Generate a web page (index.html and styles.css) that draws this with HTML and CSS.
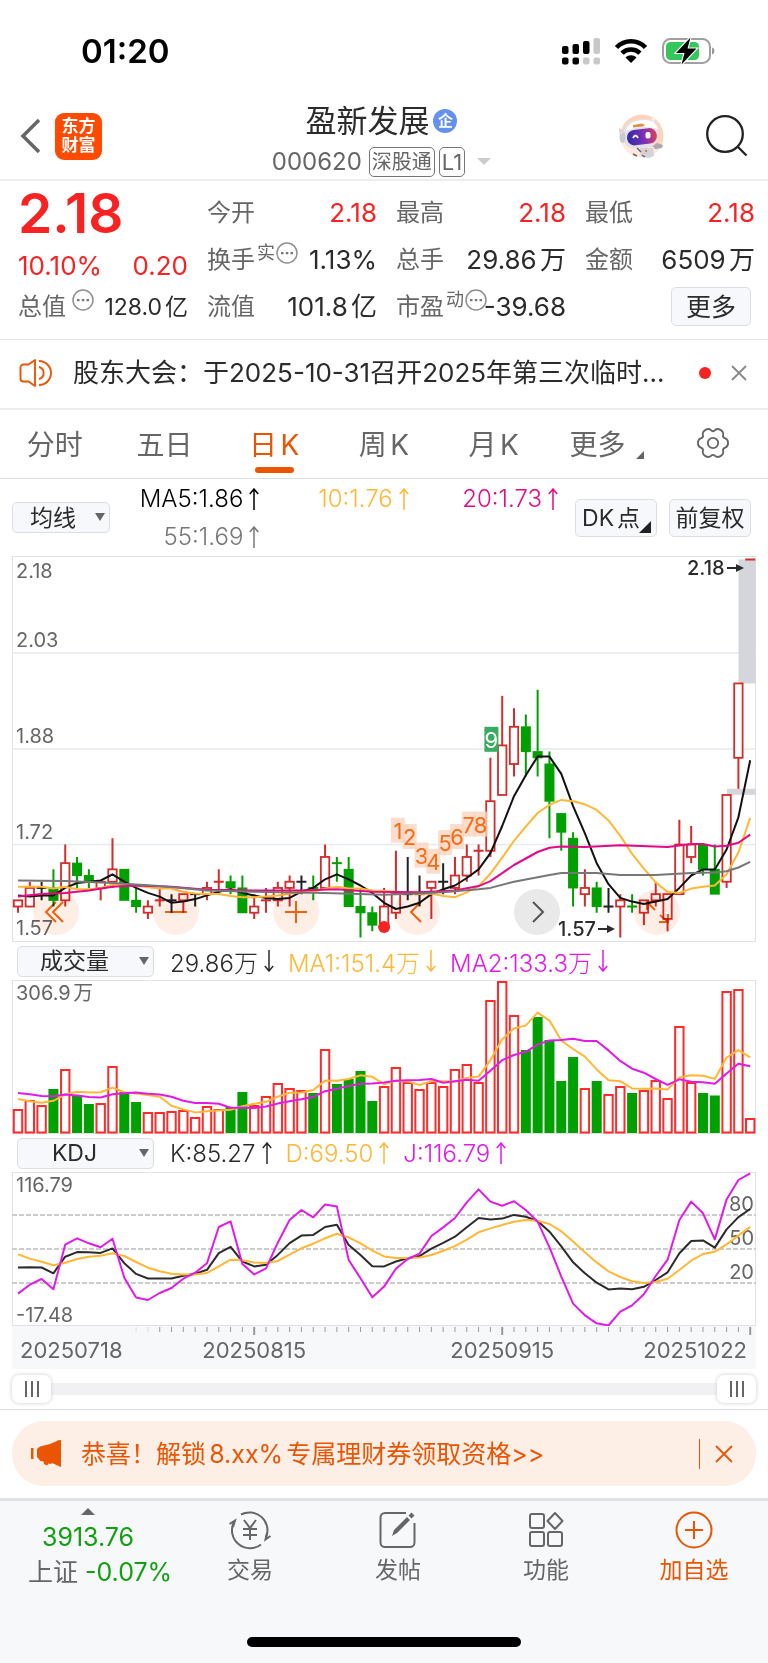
FILE: index.html
```html
<!DOCTYPE html>
<html lang="zh-CN">
<head>
<meta charset="utf-8">
<meta name="viewport" content="width=device-width, initial-scale=1">
<title>盈新发展 000620</title>
<link rel="stylesheet" href="styles.css">
</head>
<body>
<svg class="symbols" aria-hidden="true">
  <symbol id="arrow-up" viewBox="0 0 10 22"><path d="M5 22V1M.8 6L5 1l4.200 5"/></symbol>
  <symbol id="arrow-down" viewBox="0 0 10 22"><path d="M5 0v21M.8 16L5 21l4.200-5"/></symbol>
  <symbol id="more-dots" viewBox="0 0 22 22"><circle cx="11" cy="11" r="10" fill="none" stroke="#8f8f8f" stroke-width="1.500"/><path d="M5 10h2.500v2.200H5zM9.800 10h2.500v2.200H9.800zM14.500 10H17v2.200h-2.500z" fill="#777"/></symbol>
</svg>

<header class="status">
  <time class="clock">01:20</time>
  <div class="status-icons">
    <svg width="39" height="28" viewBox="0 0 39 28" aria-label="信号">
      <g fill="#000"><rect x="0" y="9" width="6.500" height="8" rx="2"/><rect x="10.500" y="7" width="6.500" height="10" rx="2"/><rect x="21" y="4" width="6.500" height="13" rx="2"/><rect x="0" y="20.500" width="6.500" height="7" rx="2"/><rect x="10.500" y="20.500" width="6.500" height="7" rx="2"/></g>
      <g fill="#c8c8c8"><rect x="31.500" y="1" width="6.500" height="16" rx="2"/><rect x="21" y="20.500" width="6.500" height="7" rx="2"/><rect x="31.500" y="20.500" width="6.500" height="7" rx="2"/></g>
    </svg>
    <svg width="34" height="26" viewBox="0 0 34 26" aria-label="无线网络">
      <g fill="none" stroke="#000" stroke-width="4.600"><path d="M2.500 9.500C10.500 1.200 23.500 1.200 31.500 9.500"/><path d="M8 15.200c5-5 13-5 18 0"/></g>
      <path d="M11.500 19.500c3-3 8-3 11 0L17 25z"/>
    </svg>
    <svg width="56" height="28" viewBox="0 0 56 28" aria-label="正在充电">
      <rect x="2" y="2" width="47" height="24" rx="7.500" fill="#fff" stroke="#a0a0a0" stroke-width="2"/>
      <rect x="5" y="5" width="33" height="18" rx="4.500" fill="#34c759"/>
      <path d="M51 10.500c3.200.8 3.200 6.200 0 7z" fill="#999"/>
      <path d="M29.500.5L15 16h8.500L20.500 27.500 35.500 11.500h-9z" fill="#000" stroke="#fff" stroke-width="2.200" paint-order="stroke"/>
    </svg>
  </div>
</header>

<nav class="title-bar">
  <div class="title-side">
    <button class="icon-button" aria-label="返回"><svg width="22" height="36" viewBox="0 0 22 36"><path d="M19 2L3 18l16 16" fill="none" stroke="#666" stroke-width="3.500"/></svg></button>
    <a class="logo" href="#"><span>东方</span><span>财富</span></a>
  </div>
  <div class="title-main">
    <h1 class="stock-name">盈新发展<span class="company">企</span></h1>
    <div class="stock-code"><span>000620</span><span class="tag tag-market">深股通</span><span class="tag tag-level">L1</span><i class="title-caret"></i></div>
  </div>
  <div class="title-side title-actions">
    <button class="icon-button" aria-label="智能助手">
      <svg width="46" height="46" viewBox="0 0 46 46">
        <defs><linearGradient id="visor" x1="0" x2="1"><stop stop-color="#3327a8"/><stop offset=".55" stop-color="#7a2fb8"/><stop offset="1" stop-color="#e0405c"/></linearGradient></defs>
        <circle cx="24" cy="23" r="21.500" fill="#ffd3bb"/>
        <path d="M33 7l3-4 1 8z" fill="#f3f1f5"/>
        <path d="M5 36l-4-6 4-6 12 8 17 2 7 4-7 5-10 3-12-3z" fill="#fff" opacity=".5"/>
        <path d="M5 24C4 11 14 6 25 6c11 0 17 6 16 15-1 11-10 15-20 15S6 33 5 24z" fill="#e2e1e8"/>
        <path d="M8 18C10 10 18 7 27 7c7 0 12 4 13 9-8-3-22-3-32 2z" fill="#fff"/>
        <ellipse cx="4.500" cy="24" rx="3" ry="6" fill="#c9c9d0"/><path d="M1 15l5 2-1 4-4-1z" fill="#d8d8de"/>
        <path d="M15 12l9-1.500 3 1.500-2 1.500-10 1z" fill="#dd9248"/>
        <rect x="9" y="16" width="30" height="15.500" rx="7.500" transform="rotate(-7 24 24)" fill="url(#visor)"/>
        <path d="M15 25q2.500-5 5 0" fill="none" stroke="#fff" stroke-width="1.800"/><rect x="27.500" y="19" width="5" height="6.500" rx="2" fill="#fff"/>
        <path d="M22 35h13l1 8-5 2-8-1z" fill="#d4d3da"/><path d="M35 33l4-3 6 2-1 3-7 1z" fill="#aaa9b3"/><path d="M19 35l4 4M15 41l4 2M24 42l3 2" stroke="#68626e" stroke-width="1.500"/><circle cx="28" cy="38" r="1.200" fill="#e97c32"/>
      </svg>
    </button>
    <button class="icon-button" aria-label="搜索"><svg width="44" height="44" viewBox="0 0 44 44"><g fill="none" stroke="#222" stroke-width="2.300"><circle cx="20" cy="20" r="17.800"/><path d="M32.500 32.500l9 9"/></g></svg></button>
  </div>
</nav>

<section class="quote">
  <strong class="price">2.18</strong>
  <div class="cell"><span class="label">今开</span><span class="value up">2.18</span></div>
  <div class="cell"><span class="label">最高</span><span class="value up">2.18</span></div>
  <div class="cell"><span class="label">最低</span><span class="value up">2.18</span></div>
  <div class="cell cell-change"><span class="value up">10.10%</span><span class="value up">0.20</span></div>
  <div class="cell"><span class="label">换手<sup>实</sup><svg class="info"><use href="#more-dots"/></svg></span><span class="value">1.13%</span></div>
  <div class="cell"><span class="label">总手</span><span class="value">29.86万</span></div>
  <div class="cell"><span class="label">金额</span><span class="value">6509万</span></div>
  <div class="cell"><span class="label">总值<svg class="info info-spaced"><use href="#more-dots"/></svg></span><span class="value value-small">128.0亿</span></div>
  <div class="cell"><span class="label">流值</span><span class="value">101.8亿</span></div>
  <div class="cell"><span class="label">市盈<sup>动</sup><svg class="info"><use href="#more-dots"/></svg></span><span class="value">-39.68</span></div>
  <div class="cell cell-end"><button class="box-button quote-more">更多</button></div>
</section>

<section class="notice">
  <svg width="34" height="30" viewBox="0 0 34 30"><g fill="none" stroke="#ea5504" stroke-width="1.900"><path d="M16 2L9.500 6.500H4.500A3 3 0 0 0 1.500 9.500v11a3 3 0 0 0 3 3h5L16 28z" stroke-linejoin="round"/><path d="M20 3a12 12 0 0 1 0 24M20 9a6.200 6.200 0 0 1 0 12"/></g></svg>
  <a class="notice-text" href="#">股东大会：于2025-10-31召开2025年第三次临时...</a>
  <i class="unread"></i>
  <button class="icon-button" aria-label="关闭公告"><svg width="16" height="16" viewBox="0 0 16 16"><path d="M1 1l14 14M15 1L1 15" stroke="#888" stroke-width="1.800"/></svg></button>
</section>

<nav class="periods">
  <button class="period">分时</button>
  <button class="period">五日</button>
  <button class="period period-active">日K</button>
  <button class="period">周K</button>
  <button class="period">月K</button>
  <button class="period period-more">更多</button>
  <button class="period" aria-label="图表设置"><svg width="32" height="32" viewBox="-1 -1 34 34"><g fill="none" stroke="#666" stroke-width="2"><path d="M32 16Q32 20 29 20.900Q26 21.750 26.800 24.800Q27.500 27.900 24 29.900Q20.500 31.900 18.200 29.700Q16 27.500 13.800 29.700Q11.500 31.900 8 29.900Q4.500 27.900 5.200 24.800Q6 21.750 3 20.900Q0 20 0 16Q0 12 3 11.100Q6 10.250 5.200 7.200Q4.500 4.100 8 2.100Q11.500.1 13.800 2.300Q16 4.500 18.200 2.300Q20.500.1 24 2.100Q27.500 4.100 26.800 7.200Q26 10.250 29 11.100Q32 12 32 16Z"/><circle cx="16" cy="16" r="5.500"/></g></svg></button>
</nav>

<main class="charts">
  <div class="main-tools">
    <label class="picker picker-small"><select aria-label="主图指标"><option>均线</option></select></label>
    <div class="averages">
      <span class="ink-black">MA5:1.86<svg class="arrow"><use href="#arrow-up"/></svg></span>
      <span class="ink-orange">10:1.76<svg class="arrow"><use href="#arrow-up"/></svg></span>
      <span class="ink-pink">20:1.73<svg class="arrow"><use href="#arrow-up"/></svg></span>
      <span class="ink-grey">55:1.69<svg class="arrow"><use href="#arrow-up"/></svg></span>
    </div>
    <button class="box-button tool dk">DK点</button>
    <button class="box-button tool">前复权</button>
  </div>

  <div class="candle-pane">
    <svg id="candles" class="chart" viewBox="0 0 744 386" role="img" aria-label="日K线图"></svg>
    <div class="chart-controls">
      <button aria-label="最早"><svg viewBox="0 0 46 46"><path d="M23 13L13 23l10 10M30 13L20 23l10 10"/></svg></button>
      <button aria-label="缩小"><svg viewBox="0 0 46 46"><path d="M12 23h22"/></svg></button>
      <button aria-label="放大"><svg viewBox="0 0 46 46"><path d="M12 23h22M23 12v22"/></svg></button>
      <button aria-label="左移"><svg viewBox="0 0 46 46"><path d="M27 13L17 23l10 10"/></svg></button>
      <button class="control-grey" aria-label="右移"><svg viewBox="0 0 46 46"><path d="M19 13l10 10-10 10"/></svg></button>
      <button aria-label="全屏"><svg viewBox="0 0 46 46"><path d="M21 21l-7-7M13 21v-8h8M26 26l8 7M34 25v8h-9"/></svg></button>
    </div>
  </div>

  <div class="sub-tools">
    <label class="picker"><select aria-label="副图指标一"><option>成交量</option></select></label>
    <span class="ink-dark">29.86万<svg class="arrow"><use href="#arrow-down"/></svg></span>
    <span class="ink-orange">MA1:151.4万<svg class="arrow"><use href="#arrow-down"/></svg></span>
    <span class="ink-magenta">MA2:133.3万<svg class="arrow"><use href="#arrow-down"/></svg></span>
  </div>
  <svg id="volume" class="chart" viewBox="0 0 744 154" role="img" aria-label="成交量图"></svg>

  <div class="sub-tools">
    <label class="picker"><select aria-label="副图指标二"><option>KDJ</option></select></label>
    <span class="ink-dark">K:85.27<svg class="arrow"><use href="#arrow-up"/></svg></span>
    <span class="ink-orange">D:69.50<svg class="arrow"><use href="#arrow-up"/></svg></span>
    <span class="ink-magenta">J:116.79<svg class="arrow"><use href="#arrow-up"/></svg></span>
  </div>
  <svg id="kdj" class="chart" viewBox="0 0 744 154" role="img" aria-label="KDJ图"></svg>
  <svg id="axis" class="chart chart-axis" viewBox="0 0 744 43" role="img" aria-label="日期轴"></svg>

  <div class="range">
    <input type="range" min="0" max="100" value="0" aria-label="起始日期">
    <input type="range" min="0" max="100" value="100" aria-label="结束日期">
  </div>
</main>

<section class="promo-area">
  <div class="promo">
    <svg width="32" height="28" viewBox="0 0 32 28" fill="#ea5504"><path d="M31 0v27l-9-4-1 1-2.500-.5-1.500 2-3-1.500-.5-2.500-3-.500L7 17V9l3-2.500 10-2.500 7-3V.5z"/><path d="M1 8h2.500v11H1z"/></svg>
    <a class="promo-text" href="#">恭喜！解锁8.xx%专属理财券领取资格&gt;&gt;</a>
    <button class="promo-close" aria-label="关闭"><svg width="18" height="18" viewBox="0 0 18 18"><path d="M1 1l16 16M17 1L1 17" stroke="#ea5504" stroke-width="1.800"/></svg></button>
  </div>
</section>

<footer class="footer">
  <nav class="dock">
    <a class="index" href="#">
      <i class="index-caret"></i>
      <span class="index-value down">3913.76</span>
      <span>上证 <span class="down">-0.07%</span></span>
    </a>
    <a class="dock-item" href="#">
      <svg width="44" height="42" viewBox="0 0 44 42"><g fill="none" stroke="#666" stroke-width="2"><path d="M13 5.500A18 18 0 0 1 38 28.500M33 35.500A18 18 0 0 1 6 13"/><path d="M1.500 15L7 11.500 5 18M42.500 27L37.500 30.500 39 24"/><path d="M16 11l6 8 6-8M22 19v12M15 20h14M15 26h14"/></g></svg>
      <span>交易</span>
    </a>
    <a class="dock-item" href="#">
      <svg width="44" height="42" viewBox="0 0 44 42"><path d="M30 4H9a4.500 4.500 0 0 0-4.500 4.500v25A4.500 4.500 0 0 0 9 38h25a4.500 4.500 0 0 0 4.500-4.500V14" fill="none" stroke="#666" stroke-width="2"/><path d="M16 27l2-6L31 8l3 3-13 13zM32.500 6.500l3-3 3 3-3 3z" fill="#666"/></svg>
      <span>发帖</span>
    </a>
    <a class="dock-item" href="#">
      <svg width="44" height="42" viewBox="0 0 44 42"><g fill="none" stroke="#666" stroke-width="2"><rect x="6" y="5" width="14" height="14" rx="2"/><rect x="6" y="23" width="14" height="14" rx="2"/><rect x="24" y="23" width="14" height="14" rx="2"/><path d="M31 4l7.500 8L31 20l-7.500-8z" stroke-linejoin="round"/></g></svg>
      <span>功能</span>
    </a>
    <a class="dock-item dock-add" href="#">
      <svg width="44" height="42" viewBox="0 0 44 42"><g fill="none" stroke="#ea5504" stroke-width="2"><circle cx="22" cy="21" r="17.500"/><path d="M13 21h18M22 12v18"/></g></svg>
      <span>加自选</span>
    </a>
  </nav>
  <div class="home-bar"></div>
</footer>
<script src="charts.js"></script>
</body>
</html>
```

FILE: styles.css
```css
* { box-sizing: border-box; }

body {
  margin: 0;
  background: #fff;
  color: #2b2b2b;
  font-family: Inter, "Noto Sans CJK SC", sans-serif;
  font-size: 25px;
  text-autospace: normal;
}

button, select, input { font: inherit; color: inherit; margin: 0; }
button { padding: 0; border: 0; background: none; }
a { color: inherit; text-decoration: none; }
svg { display: block; flex: none; }
.symbols { position: absolute; width: 0; height: 0; }
.icon-button { display: block; flex: none; }

/* status bar */
.status {
  display: flex;
  justify-content: space-between;
  align-items: center;
  height: 96px;
  padding: 6px 51px 0 81px;
}
.clock { color: #000; font-size: 33px; font-weight: 600; line-height: 40px; }
.status-icons { display: flex; align-items: center; gap: 13px; }

/* title bar */
.title-bar {
  display: grid;
  grid-template-columns: 1fr auto 1fr;
  align-items: center;
  height: 85px;
  padding: 0 19px 0 20px;
  border-bottom: 2px solid #ededef;
}
.title-side { display: flex; align-items: center; gap: 13px; padding-bottom: 3px; }
.title-actions { justify-content: flex-end; gap: 41px; }
.logo {
  display: grid;
  align-content: center;
  justify-items: center;
  width: 47px;
  height: 47px;
  border-radius: 9px;
  background: #ff4a00;
  color: #fff;
  font-size: 17px;
  font-weight: 700;
  line-height: 19px;
}
.title-main { display: grid; justify-items: center; gap: 4px; padding-right: 6px; }
.stock-name {
  display: flex;
  align-items: center;
  gap: 4px;
  margin: 0;
  font-size: 31px;
  font-weight: 400;
  line-height: 44px;
}
.company {
  width: 24px;
  height: 24px;
  border-radius: 50%;
  background: #6591ee;
  color: #fff;
  font-size: 15px;
  font-weight: 700;
  line-height: 23px;
  text-align: center;
}
.stock-code { display: flex; align-items: center; gap: 4px; color: #666; font-size: 24px; line-height: 30px; }
.tag { padding: 0 2px; border: 1px solid #777; border-radius: 5px; font-size: 20px; line-height: 28px; }
.tag-market { margin-left: 3px; }
.tag-level { font-size: 22px; }
.title-caret { margin-left: 8px; border: 7px solid transparent; border-top-color: #ccc; border-bottom: 0; }

/* quote grid */
.quote {
  display: grid;
  grid-template-columns: repeat(4, minmax(0, 1fr));
  grid-auto-rows: 47px;
  align-items: center;
  column-gap: 19px;
  padding: 8px 13px 9px 18px;
  border-bottom: 1px solid #e5e5e7;
}
.price { color: #f72323; font-size: 55px; font-weight: 600; line-height: 52px; }
.cell { display: flex; align-items: center; white-space: nowrap; line-height: 36px; }
.cell-change { align-self: end; line-height: 34px; }
.label { display: flex; flex: 1 1 0; min-width: 0; color: #666; font-size: 24px; }
.label sup { margin: 0 1px 0 2px; font-size: 18px; line-height: 22px; }
.info { width: 22px; height: 22px; }
.info-spaced { margin-left: 6px; }
.value { flex: none; font-size: 26px; }
.value:first-child { flex: 1; }
.value-small { font-size: 23px; }
.up { color: #f72323; }
.down { color: #12a012; }
.cell-end { justify-content: flex-end; }
.box-button {
  flex: none;
  border: 1px solid #dcdee5;
  border-radius: 5px;
  background: #f7f8fb;
  line-height: 36px;
}
.quote-more { width: 80px; height: 39px; margin-right: 4px; }

/* notice */
.notice {
  display: flex;
  align-items: center;
  height: 70px;
  padding: 0 21px 2px 19px;
  border-bottom: 2px solid #ededef;
}
.notice-text {
  flex: 1;
  margin-left: 20px;
  white-space: nowrap;
  font-size: 26px;
  line-height: 40px;
  text-autospace: no-autospace;
}
.unread { width: 12px; height: 12px; margin: 0 20px 0 8px; border-radius: 50%; background: #f72323; }

/* period tabs */
.periods {
  display: grid;
  grid-template-columns: repeat(7, 1fr);
  height: 69px;
  border-bottom: 1px solid #dcdde5;
}
.period {
  position: relative;
  display: grid;
  place-items: center;
  padding-bottom: 3px;
  color: #666;
  font-size: 28px;
}
.period-active { color: #ea5504; }
.period-active::after {
  content: "";
  position: absolute;
  bottom: 5px;
  width: 39px;
  height: 6px;
  border-radius: 3px;
  background: #ea5504;
}
.period-more { padding-right: 12px; }
.period-more::after {
  content: "";
  position: absolute;
  right: 14px;
  bottom: 19px;
  border: 4px solid #666;
  border-top-color: transparent;
  border-left-color: transparent;
}

/* charts */
.charts { padding: 0 12px; }
.main-tools { display: flex; align-items: center; height: 77px; padding-right: 5px; }
.picker { position: relative; flex: none; width: 137px; height: 31px; }
.picker-small { width: 98px; }
.picker select {
  display: block;
  width: 100%;
  height: 31px;
  padding: 0 22px 0 0;
  border: 1px solid #dcdee5;
  border-radius: 5px;
  background: #f7f8fb;
  appearance: none;
  font-size: 23px;
  font-weight: 400;
  line-height: 28px;
  text-align-last: center;
}
.picker-small select { padding-right: 16px; }
.picker::after {
  content: "";
  position: absolute;
  top: 11px;
  right: 5px;
  border: 5px solid transparent;
  border-top: 8px solid #666;
  border-bottom: 0;
}
.averages {
  display: grid;
  flex: 1;
  grid-template-columns: repeat(3, 1fr);
  margin-right: 17px;
  font-size: 24px;
  font-weight: 300;
  line-height: 38px;
}
.averages span { display: flex; align-items: center; justify-content: flex-end; gap: 6px; }
.arrow { width: 10px; height: 22px; fill: none; stroke: currentColor; stroke-width: 1.500; }
.tool { width: 82px; height: 38px; font-size: 23px; }
.dk { position: relative; margin-right: 12px; padding-right: 10px; }
.dk::after {
  content: "";
  position: absolute;
  right: 5px;
  bottom: 3px;
  border: 6px solid #222;
  border-top-color: transparent;
  border-left-color: transparent;
}
.ink-black { color: #000; }
.ink-dark { color: #2b2b2b; }
.ink-grey { color: #777; }
.ink-orange { color: #ffb735; }
.ink-pink { color: #e20a86; }
.ink-magenta { color: #e01be8; }

.chart { width: 100%; height: auto; font-size: 20px; }
.chart-axis { background: #f7f8fa; font-size: 22px; }
.candle-pane { position: relative; }
.chart-controls {
  position: absolute;
  bottom: 7px;
  left: 21px;
  right: 76px;
  display: flex;
  justify-content: space-between;
  mix-blend-mode: multiply;
}
.chart-controls button { width: 46px; height: 46px; border-radius: 50%; background: #ffeee6; }
.chart-controls svg { fill: none; stroke: #f2600c; stroke-width: 2; }
.chart-controls .control-grey { background: #e9e9e9; }
.chart-controls .control-grey svg { stroke: #555; }

.sub-tools {
  display: flex;
  align-items: center;
  gap: 14px;
  height: 38px;
  padding-left: 5px;
  font-size: 24px;
  font-weight: 300;
  white-space: nowrap;
  text-autospace: no-autospace;
}
.sub-tools .picker { margin-right: 2px; }
.sub-tools span { display: flex; align-items: center; gap: 6px; }

.range { position: relative; display: grid; align-items: center; height: 40px; }
.range::before { content: ""; height: 12px; grid-area: 1 / 1; background: #f1f1f4; }
.range input { grid-area: 1 / 1; width: 100%; height: 28px; appearance: none; background: none; pointer-events: none; }
.range input::-webkit-slider-thumb {
  width: 39px;
  height: 28px;
  appearance: none;
  border-radius: 7px;
  background:
    linear-gradient(90deg, #666 2px, transparent 2px 6px, #666 6px 8px, transparent 8px 12px, #666 12px) center / 14px 16px no-repeat,
    #fff;
  box-shadow: 0 0 4px #ccc;
  pointer-events: auto;
}

/* promotion */
.promo-area { padding: 11px 12px 12px; border-top: 1px solid #dcdde5; }
.promo {
  display: flex;
  align-items: center;
  height: 65px;
  padding: 0 23px 0 18px;
  border-radius: 32px;
  background: #fdeee6;
  color: #ea5504;
}
.promo-text { flex: 1; margin-left: 19px; padding-bottom: 3px; }
.promo-close { padding: 6px 0 6px 15px; border-left: 1px solid #ea5504; }

/* bottom dock */
.footer { padding-bottom: 17px; border-top: 3px solid #e0e1e3; background: #f7f8fa; }
.dock { display: grid; grid-template-columns: 176px repeat(4, 1fr); height: 136px; color: #666; }
.index { display: grid; align-content: start; justify-items: center; padding: 7px 0 0 24px; font-size: 25px; line-height: 35px; }
.index-caret { margin: 0 24px 5px 0; border: 7px solid transparent; border-top: 0; border-bottom-color: #666; }
.index-value { margin-right: 24px; }
.dock-item { display: grid; align-content: start; justify-items: center; padding-top: 8px; font-size: 23px; line-height: 38px; }
.dock-add { color: #ea5504; }
.home-bar { width: 274px; height: 10px; margin: 0 auto; border-radius: 5px; background: #000; }
```

FILE: charts.js
```js
const NS = 'http://www.w3.org/2000/svg';
const RED = '#d42b2b', GREEN = '#00a000';

// open, close, high, low, in fen
const bars = [
  [162,163,163,161],[162,165,166,162],[165,165,166,163],[165,163,168,162],[163,169,172,162],
  [169,167,170,165],[167,166,168,165],[165,166,166,163],[166,168,173,165],[168,163,168,163],
  [163,162,165,161],[161,162,163,160],[163,163,165,162],[163,163,164,161],[163,164,164,161],
  [164,164,164,162],[164,165,166,163],[166,166,168,164],[166,165,167,164],[165,161,167,161],
  [161,162,164,160],[163,163,165,161],[163,165,166,162],[165,166,167,162],[166,166,167,164],
  [165,165,167,163],[165,170,172,165],[169,169,170,166],[168,162,170,162],[162,161,165,157],
  [161,159,162,158],[159,162,165,159],[161,164,171,160],[164,164,170,163],[164,164,167,162],
  [165,166,166,160],[166,166,169,164],[165,167,170,164],[167,170,172,166],[171,171,172,167],
  [171,179,186,170],[180,188,196,180],[185,191,194,183],[191,187,193,183],[187,186,197,183],
  [185,179,187,173],[177,174,177,171],[173,165,174,162],[164,165,168,162],[165,162,166,161],
  [162,162,165,161],[162,163,164,157],[162,162,164,161],[161,163,163,159],[163,164,166,162],
  [160,164,164,158],[164,172,176,164],[170,172,175,169],[172,168,172,167],[168,164,172,164],
  [166,180,180,165],[186,198,198,181],[218,218,218,218]
];
const earlierCloses = [165, 165, 166, 166, 171, 166, 164, 163, 163];

const volumes = [24,33,28,44,64,37,29,30,67,41,31,21,21,22,23,16,27,24,26,41,28,37,50,45,43,40,84,49,54,62,32,47,66,51,44,51,47,64,69,51,133,152,118,83,116,93,52,76,45,52,39,47,40,43,53,35,107,51,40,37.5,142,144,15];
const earlierVolumes = [46, 46, 46, 46, 46, 44, 36, 34, 32];

const ma20 = [[0,163.6],[2,164],[4,164.2],[6,164.6],[8,165.2],[10,165.4],[13,165.2],[16,164.7],[20,164.6],[24,164.6],[27,164.8],[30,164.4],[34,164.3],[37,164.6],[39,165.3],[40,166.1],[41,167.4],[42,168.7],[44,170.8],[45,171.5],[46,171.7],[48,171.6],[51,171.9],[55,171.6],[57,172.1],[58,172.1],[59,171.7],[60,171.8],[61,172.3],[62,173.6]];
const ma55 = [[0,166.2],[4,166.1],[8,165.8],[12,165.3],[16,164.6],[20,164.4],[26,164.2],[31,163.9],[36,164.3],[39,164.8],[40,165],[42,166],[45,167.1],[46,167.4],[49,167.4],[51,167.1],[54,167.1],[57,167.4],[59,167.5],[60,167.7],[61,168.3],[62,169.2]];

const j = [10.6,18.5,23.5,14.4,53.8,59.4,55,51.5,59.1,24.7,7.1,5,11.2,15.6,23.8,29.1,37.4,69.4,74.4,36.8,27.6,32.9,55.6,75.6,84.4,77.9,89.4,87.4,40.3,24.1,7.4,16.8,32.6,41.2,45.9,61.5,69.1,77.4,91.2,102.6,91.8,88.2,92.1,84.4,74.1,51.5,25.6,1.8,-8.5,-15.6,-17.48,-5.3,0.3,10,26.2,40.6,75.6,91.8,81.5,58.5,93.8,110.9,116.79];
const d = [45.3,41.5,38.8,35.6,37.9,41.2,43.2,44.1,46.2,43.8,38.5,33.5,30.3,28.2,27.6,27.6,28.8,34.7,40.6,40,38.2,37.6,39.4,45,50.6,54.7,59.4,63.5,60.3,55,48.5,43.5,42.1,42.1,42.6,44.7,48.5,52.6,58.2,64.7,68.2,71.2,74.1,75.6,75,72.1,65.6,56.5,47.1,38.2,30.3,25.3,21.5,20,20.9,23.8,31.5,39.7,45.6,47.6,54.1,61.8,69.5];

function add(parent, tag, attrs, text) {
  const el = document.createElementNS(NS, tag);
  for (const key in attrs) el.setAttribute(key, attrs[key]);
  if (text !== undefined) el.textContent = text;
  parent.appendChild(el);
  return el;
}
const x = i => 6 + i * 11.81;
const indexed = list => list.map((v, i) => [i, v]);

function line(svg, points, y, color) {
  add(svg, 'polyline', {
    points: points.map(([i, v]) => x(i).toFixed(1) + ',' + y(v).toFixed(1)).join(' '),
    fill: 'none', stroke: color, 'stroke-width': 2, 'stroke-linejoin': 'round'
  });
}
function average(values, earlier, n) {
  const all = earlier.concat(values);
  return values.map((_, i) => {
    const end = i + earlier.length + 1;
    return all.slice(end - n, end).reduce((a, b) => a + b, 0) / n;
  });
}
function frame(svg, height) {
  add(svg, 'rect', { x: .5, y: .5, width: 743, height: height - 1, fill: 'none', stroke: '#dfe1e6' });
}
function label(svg, lx, ly, text, extra) {
  add(svg, 'text', Object.assign({ x: lx, y: ly, fill: '#666' }, extra), text);
}
function tone(i) {
  const [open, close] = bars[i];
  if (close !== open) return close > open ? 'up' : 'down';
  const before = i ? bars[i - 1][1] : open;
  return close === before ? 'flat' : close > before ? 'up' : 'down';
}

function drawCandles() {
  const svg = document.getElementById('candles');
  const y = p => 3.5 + (218 - p) * 6.197;
  frame(svg, 386);
  [97, 193, 288.5].forEach(v => add(svg, 'path', { d: `M0 ${v}H744`, stroke: '#e6e9ef', 'stroke-width': 1.5 }));
  add(svg, 'rect', { x: 726.5, y: y(218), width: 17, height: y(198) - y(218), fill: '#d4d6dc' });
  add(svg, 'rect', { x: 715, y: y(181), width: 28.5, height: 6, fill: '#d4d6dc' });
  bars.forEach(([open, close, high, low], i) => {
    const kind = tone(i);
    const color = kind === 'up' ? RED : kind === 'down' ? GREEN : '#222';
    const top = y(Math.max(open, close)), bottom = y(Math.min(open, close));
    add(svg, 'path', { d: `M${x(i)} ${y(high)}V${top}M${x(i)} ${bottom}V${y(low)}`, stroke: color, 'stroke-width': 2 });
    if (open === close) add(svg, 'path', { d: `M${x(i) - 5} ${top}h10`, stroke: color, 'stroke-width': 2 });
    else if (kind === 'up') add(svg, 'rect', { x: x(i) - 4.2, y: top, width: 8.4, height: bottom - top, fill: '#fff', stroke: color, 'stroke-width': 1.8 });
    else add(svg, 'rect', { x: x(i) - 5, y: top - .5, width: 10, height: bottom - top + 1, fill: color });
  });
  const closes = bars.map(b => b[1]);
  line(svg, indexed(average(closes, earlierCloses, 5)), y, '#111');
  line(svg, indexed(average(closes, earlierCloses, 10)), y, '#ffb735');
  line(svg, ma20, y, '#e20a86');
  line(svg, ma55, y, '#777');

  for (let n = 1; n <= 9; n++) {
    const i = 31 + n, last = n === 9;
    const bottom = y(bars[i][2]) - (last ? 7 : 9);
    const cx = last ? x(i) + 1 : x(i) + 2;
    add(svg, 'rect', { x: cx - 7, y: bottom - 24, width: 14, height: 25, fill: last ? '#3aac5f' : '#fdd5bf', 'fill-opacity': last ? 1 : .8 });
    label(svg, cx, bottom - 3, n, { 'text-anchor': 'middle', 'font-size': 22, fill: last ? '#fff' : '#fb6a13' });
  }
  add(svg, 'circle', { cx: x(31), cy: 371, r: 6, fill: '#f72323' });

  label(svg, 4, 22, '2.18');
  label(svg, 4, 91, '2.03');
  label(svg, 4, 187, '1.88');
  label(svg, 4, 283, '1.72');
  label(svg, 4, 379, '1.57');
  [[675, 12, '2.18'], [546, 373, '1.57']].forEach(([tx, cy, text]) => {
    label(svg, tx, cy + 7, text, { fill: '#2b2b2b', 'font-weight': 500 });
    add(svg, 'path', { d: `M${tx + 40} ${cy}h12`, stroke: '#2b2b2b', 'stroke-width': 2 });
    add(svg, 'path', { d: `M${tx + 49} ${cy - 4}l8 4-8 4z`, fill: '#2b2b2b' });
  });
}

function drawVolume() {
  const svg = document.getElementById('volume');
  const y = v => 153 - v;
  frame(svg, 154);
  volumes.forEach((v, i) => {
    if (tone(i) === 'down') add(svg, 'rect', { x: x(i) - 5, y: y(v), width: 10, height: v, fill: GREEN });
    else add(svg, 'rect', { x: x(i) - 4.2, y: y(v) + 1, width: 8.4, height: v - 1.5, fill: '#fff', stroke: '#ff2b2b', 'stroke-width': 2 });
  });
  line(svg, indexed(average(volumes, earlierVolumes, 5)), y, '#ffb735');
  line(svg, indexed(average(volumes, earlierVolumes, 10)), y, '#e01be8');
  label(svg, 4, 20, '306.9万');
}

function drawKdj() {
  const svg = document.getElementById('kdj');
  const y = v => 77 + (50 - v) * 1.133;
  frame(svg, 154);
  [80, 50, 20].forEach(v => {
    add(svg, 'path', { d: `M0 ${y(v)}H744`, stroke: '#ccc', 'stroke-width': 2, 'stroke-dasharray': '5 2' });
    label(svg, 742, y(v) - 4, v, { 'text-anchor': 'end' });
  });
  label(svg, 4, 20, '116.79');
  label(svg, 4, 150, '-17.48');
  line(svg, indexed(j.map((v, i) => (v + 2 * d[i]) / 3)), y, '#2b2b2b');
  line(svg, indexed(d), y, '#ffb735');
  line(svg, indexed(j), y, '#e01be8');
}

function drawAxis() {
  const svg = document.getElementById('axis');
  for (let i = 10; i < bars.length; i++) {
    const major = i === 20 || i === 41 || i === 62;
    add(svg, 'path', { d: `M${x(i)} 1v${major ? 8 : 5}`, stroke: i < 12 ? '#ddd' : '#999', 'stroke-width': major ? 2 : 1 });
  }
  label(svg, 8, 32, '20250718');
  label(svg, x(20), 32, '20250815', { 'text-anchor': 'middle' });
  label(svg, x(41), 32, '20250915', { 'text-anchor': 'middle' });
  label(svg, 735, 32, '20251022', { 'text-anchor': 'end' });
}

drawCandles();
drawVolume();
drawKdj();
drawAxis();
```
